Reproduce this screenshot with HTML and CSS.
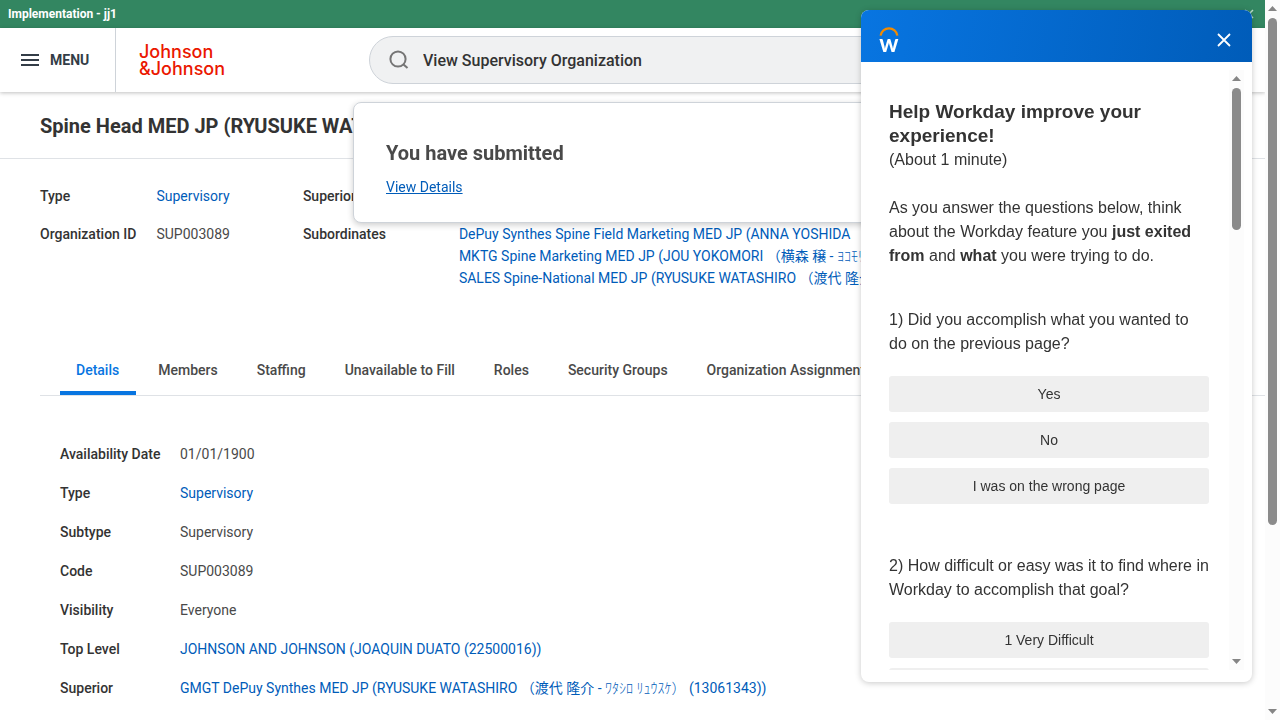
FILE: index.html
```html
<!DOCTYPE html>
<html lang="en">
<head>
<meta charset="utf-8">
<title>View Supervisory Organization</title>
<link rel="stylesheet" href="styles.css">
</head>
<body>
<div class="viewport">
  <div class="page">
    <div class="env-bar">
      <span>Implementation - jj1</span>
      <button class="env-close" aria-label="Dismiss">
        <svg width="10" height="10" viewBox="0 0 10 10"><path d="M1 1l8 8M9 1l-8 8" stroke="#b9dcc9" stroke-width="1.5"/></svg>
      </button>
    </div>
    <header class="header">
      <button class="menu">
        <svg width="18" height="12" viewBox="0 0 18 12"><path d="M0 1h18M0 6h18M0 11h18" stroke="#333d47" stroke-width="2"/></svg>
        <span>MENU</span>
      </button>
      <a class="brand" href="#">Johnson<br>&amp;Johnson</a>
      <div class="search">
        <svg width="20" height="20" viewBox="0 0 20 20" fill="none" stroke="#757575" stroke-width="2"><circle cx="9" cy="9" r="7.6"/><path d="M14.5 14.5l4 3.6"/></svg>
        <input type="text" aria-label="Search" value="View Supervisory Organization">
      </div>
    </header>
    <div class="title-row">
      <h1>Spine Head MED JP (RYUSUKE WATASHIRO)</h1>
    </div>
    <main class="content">
      <div class="summary">
        <dl class="facts">
          <dt>Type</dt><dd><a href="#">Supervisory</a></dd>
          <dt>Organization ID</dt><dd>SUP003089</dd>
        </dl>
        <dl class="facts facts-wide">
          <dt>Superior</dt><dd></dd>
          <dt>Subordinates</dt>
          <dd class="links">
            <a href="#">DePuy Synthes Spine Field Marketing MED JP (ANNA YOSHIDA</a>
            <a href="#">MKTG Spine Marketing MED JP (JOU YOKOMORI （横森 穣 - <span class="kana">ﾖｺﾓﾘ</span></a>
            <a href="#">SALES Spine-National MED JP (RYUSUKE WATASHIRO （渡代 隆介</a>
          </dd>
        </dl>
      </div>
      <nav class="tabs">
        <button class="tab active">Details</button>
        <button class="tab">Members</button>
        <button class="tab">Staffing</button>
        <button class="tab">Unavailable to Fill</button>
        <button class="tab">Roles</button>
        <button class="tab">Security Groups</button>
        <button class="tab">Organization Assignments</button>
      </nav>
      <dl class="details">
        <dt>Availability Date</dt><dd>01/01/1900</dd>
        <dt>Type</dt><dd><a href="#">Supervisory</a></dd>
        <dt>Subtype</dt><dd>Supervisory</dd>
        <dt>Code</dt><dd>SUP003089</dd>
        <dt>Visibility</dt><dd>Everyone</dd>
        <dt>Top Level</dt><dd><a href="#">JOHNSON AND JOHNSON (JOAQUIN DUATO (22500016))</a></dd>
        <dt>Superior</dt><dd><a href="#">GMGT DePuy Synthes MED JP (RYUSUKE WATASHIRO （渡代 隆介 - <span class="kana">ﾜﾀｼﾛ ﾘｭｳｽｹ）</span> (13061343))</a></dd>
      </dl>
    </main>
  </div>
  <div class="scrollbar">
    <svg width="9" height="5" viewBox="0 0 9 5"><path d="M0 5L4.500 0L9 5z" fill="#858585"/></svg>
    <div class="track"><div class="thumb page-thumb"></div></div>
    <svg width="9" height="5" viewBox="0 0 9 5"><path d="M0 0L4.500 5L9 0z" fill="#858585"/></svg>
  </div>
</div>

<section class="toast">
  <h2>You have submitted</h2>
  <a href="#">View Details</a>
</section>

<aside class="survey">
  <div class="survey-head">
    <svg class="workday" width="20" height="26" viewBox="0 0 20 26" aria-label="Workday">
      <path d="M1.600 8.600A8.500 8.500 0 0 1 18.400 8.600" fill="none" stroke="#f38b00" stroke-width="2.200"/>
      <text x="10" y="25" text-anchor="middle" fill="#fff">w</text>
    </svg>
    <button class="survey-close" aria-label="Close">
      <svg width="14" height="14" viewBox="0 0 14 14"><path d="M1 1l12 12M13 1L1 13" stroke="#fff" stroke-width="1.800"/></svg>
    </button>
  </div>
  <div class="survey-body">
    <div class="survey-text">
      <h3>Help Workday improve your experience!</h3>
      <p>(About 1 minute)</p>
      <p class="intro">As you answer the questions below, think about the Workday feature you <b>just exited from</b> and <b>what</b> you were trying to do.</p>
      <div class="question">
        <p>1) Did you accomplish what you wanted to do on the previous page?</p>
        <div class="choices">
          <button>Yes</button>
          <button>No</button>
          <button>I was on the wrong page</button>
        </div>
      </div>
      <div class="question">
        <p>2) How difficult or easy was it to find where in Workday to accomplish that goal?</p>
        <div class="choices">
          <button>1 Very Difficult</button>
          <button aria-label="2"></button>
        </div>
      </div>
    </div>
    <div class="scrollbar">
      <svg width="9" height="5" viewBox="0 0 9 5"><path d="M0 5L4.500 0L9 5z" fill="#858585"/></svg>
      <div class="track"><div class="thumb survey-thumb"></div></div>
      <svg width="9" height="5" viewBox="0 0 9 5"><path d="M0 0L4.500 5L9 0z" fill="#858585"/></svg>
    </div>
  </div>
</aside>
</body>
</html>
```

FILE: styles.css
```css
* { box-sizing: border-box; }
body {
  margin: 0;
  font: 14px/20px Roboto, "Noto Sans CJK JP", sans-serif;
  color: #494949;
  background: #fff;
}
h1, h2, h3, p, dl, dd { margin: 0; }
button { border: 0; background: none; padding: 0; font: inherit; color: inherit; cursor: pointer; }
a { color: #005cb9; text-decoration: none; }
svg { display: block; flex: none; }

.viewport { display: flex; height: 100vh; overflow: hidden; }
.page { flex: 1; min-width: 0; overflow: hidden; }

.env-bar {
  display: flex;
  justify-content: space-between;
  align-items: center;
  height: 28px;
  padding: 0 11px 0 8px;
  background: #338661;
  color: #fff;
  font-size: 12px;
  font-weight: 700;
}

.header {
  display: flex;
  align-items: center;
  height: 64px;
  box-shadow: 0 1px 4px rgba(0, 0, 0, .25);
}
.menu {
  display: flex;
  align-items: center;
  gap: 11px;
  width: 116px;
  height: 64px;
  padding-left: 21px;
  border-right: 1px solid #ced3d9;
  color: #333d47;
  font-weight: 700;
}
.brand {
  width: 253px;
  padding-left: 23px;
  color: #eb1700;
  font: 500 18px/17px Inter, sans-serif;
}
.search {
  display: flex;
  align-items: center;
  gap: 14px;
  flex: 0 1 528px;
  height: 48px;
  padding: 0 19px;
  border: 1px solid #ced3d9;
  border-radius: 24px;
  background: #f0f1f2;
}
.search input {
  flex: 1;
  min-width: 0;
  padding: 2px 0 0;
  border: 0;
  background: none;
  font: 500 16px/24px Roboto, sans-serif;
  color: #333;
}

.title-row { padding: 20px 40px 18px; border-bottom: 1px solid #dfe2e6; }
.title-row h1 { font-size: 20px; line-height: 28px; font-weight: 700; color: #333; white-space: nowrap; }

.content { padding: 27px 0 0 40px; }
dt { font-weight: 500; color: #333; }
.summary { display: flex; gap: 73px; height: 159px; }
.facts {
  display: grid;
  grid-template-columns: auto auto;
  align-content: start;
  gap: 18px 20px;
  white-space: nowrap;
}
.facts-wide { grid-template-columns: 136px auto; }
.facts > dt, .facts > dd { min-height: 20px; }
.links { display: grid; grid-auto-rows: 22px; justify-items: start; }
.kana { font-weight: 300; }

.tabs { display: flex; gap: 6px; height: 51px; padding-left: 20px; border-bottom: 1px solid #dfe2e6; }
.tab {
  flex: none;
  padding: 0 17px 0 16px;
  border-top: 4px solid transparent;
  border-bottom: 4px solid transparent;
  font-weight: 500;
}
.tab.active {
  color: #0875e1;
  background: linear-gradient(#0875e1, #0875e1) bottom / 100% 4px no-repeat border-box;
}

.details {
  display: grid;
  grid-template-columns: 100px 1fr;
  gap: 19px 20px;
  padding: 48px 0 0 20px;
  white-space: nowrap;
}
.details > dt, .details > dd { height: 20px; }

.scrollbar {
  display: flex;
  flex-direction: column;
  align-items: center;
  flex: none;
  width: 15px;
  padding: 6px 0;
  background: #fcfcfc;
}
.track { flex: 1; padding: 7px 0; }
.thumb { width: 9px; border-radius: 5px; background: #8b8b8b; }
.page-thumb { height: 507px; }
.survey-thumb { height: 142px; }

.toast {
  position: fixed;
  top: 102px;
  left: 353px;
  width: 560px;
  padding: 38px 32px 25px;
  border: 1px solid #ced3d9;
  border-radius: 8px;
  background: #fff;
  box-shadow: 0 2px 6px rgba(0, 0, 0, .2);
}
.toast h2 { font-size: 20px; line-height: 24px; font-weight: 700; margin-bottom: 12px; }
.toast a { text-decoration: underline; }

.survey {
  position: fixed;
  top: 10px;
  right: 28px;
  bottom: 38px;
  display: flex;
  flex-direction: column;
  width: 391px;
  border-radius: 8px;
  overflow: hidden;
  background: #fff;
  box-shadow: 0 1px 6px rgba(0, 0, 0, .22);
  font: 16px/24px "Liberation Sans", Arial, sans-serif;
  color: #333;
}
.survey-head {
  display: flex;
  justify-content: space-between;
  align-items: center;
  flex: none;
  height: 52px;
  padding: 8px 21px 0 18px;
  background: linear-gradient(100deg, #0875e1, #005cb9);
}
.workday text { font: 700 24px Lato, sans-serif; }
.survey-body { display: flex; flex: 1; min-height: 0; padding: 8px 8px 12px 28px; }
.survey-text { flex: 1; padding: 30px 20px 0 0; overflow: hidden; }
.survey-text h3 { font-size: 19px; line-height: 24px; }
.intro { margin-top: 24px; }
.question { margin-top: 40px; }
.question + .question { margin-top: 50px; }
.choices { display: grid; gap: 10px; margin-top: 20px; }
.choices button { height: 36px; border-radius: 3px; background: #efefef; font-size: 14px; }
```
